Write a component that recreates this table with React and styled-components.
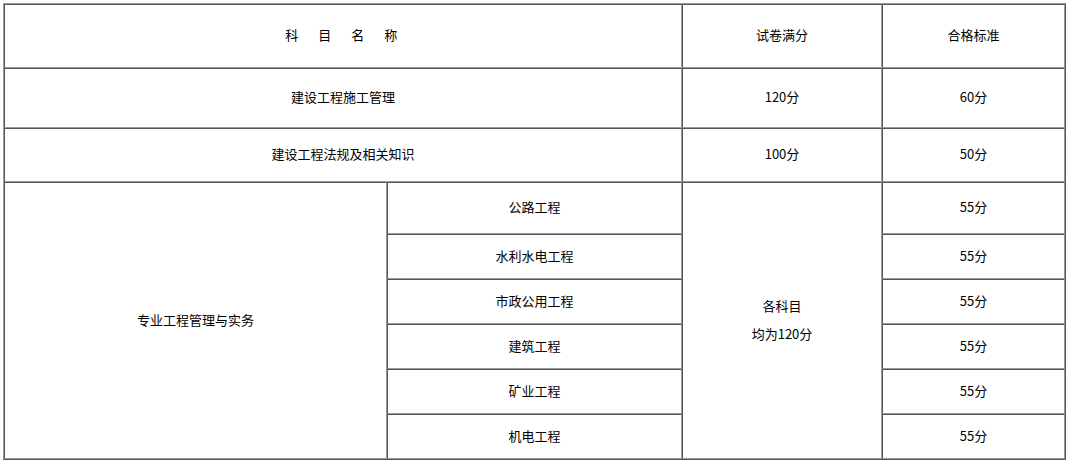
import React from "react";
import styled, { createGlobalStyle } from "styled-components";

const Global = createGlobalStyle`
  html, body { margin: 0; padding: 0; background: #fff; }
  body { padding: 3px 0 0 3px; font-family: "Noto Sans CJK SC", "Noto Sans", sans-serif; }
`;

const Table = styled.table`
  border-collapse: separate;
  border-spacing: 0;
  width: 1061px;
  table-layout: fixed;
  border-top: 1px solid #9a9a9a;
  border-left: 1px solid #9a9a9a;
  border-right: 1px solid #555;
  border-bottom: 1px solid #555;
  font-size: 13px;
  color: #000;
`;

const Cell = styled.td`
  border-top: 1px solid #555;
  border-left: 1px solid #555;
  border-right: 1px solid #9a9a9a;
  border-bottom: 1px solid #9a9a9a;
  text-align: center;
  vertical-align: middle;
  padding: 0 0 2px 0;
  height: ${(p) => p.$h}px;
  line-height: ${(p) => p.$lh || 16}px;
  letter-spacing: ${(p) => p.$ls || 0}px;
  box-sizing: border-box;
`;

const Row = styled.tr``;

const subjects = [
  ["公路工程", 52],
  ["水利水电工程", 45],
  ["市政公用工程", 45],
  ["建筑工程", 45],
  ["矿业工程", 45],
  ["机电工程", 45],
];

export default function App() {
  return (
    <>
      <Global />
      <Table>
        <colgroup>
          <col style={{ width: 383 }} />
          <col style={{ width: 295 }} />
          <col style={{ width: 200 }} />
          <col style={{ width: 183 }} />
        </colgroup>
        <tbody>
          <Row>
            <Cell colSpan={2} $h={64} $ls={3.5}>科　目　名　称</Cell>
            <Cell $h={64}>试卷满分</Cell>
            <Cell $h={64}>合格标准</Cell>
          </Row>
          <Row>
            <Cell colSpan={2} $h={60}>建设工程施工管理</Cell>
            <Cell $h={60}>120分</Cell>
            <Cell $h={60}>60分</Cell>
          </Row>
          <Row>
            <Cell colSpan={2} $h={54}>建设工程法规及相关知识</Cell>
            <Cell $h={54}>100分</Cell>
            <Cell $h={54}>50分</Cell>
          </Row>
          {subjects.map(([name, h], i) => (
            <Row key={name}>
              {i === 0 && (
                <Cell rowSpan={6} $h={h}>专业工程管理与实务</Cell>
              )}
              <Cell $h={h}>{name}</Cell>
              {i === 0 && (
                <Cell rowSpan={6} $h={h} $lh={28}>
                  各科目
                  <br />
                  均为120分
                </Cell>
              )}
              <Cell $h={h}>55分</Cell>
            </Row>
          ))}
        </tbody>
      </Table>
    </>
  );
}
